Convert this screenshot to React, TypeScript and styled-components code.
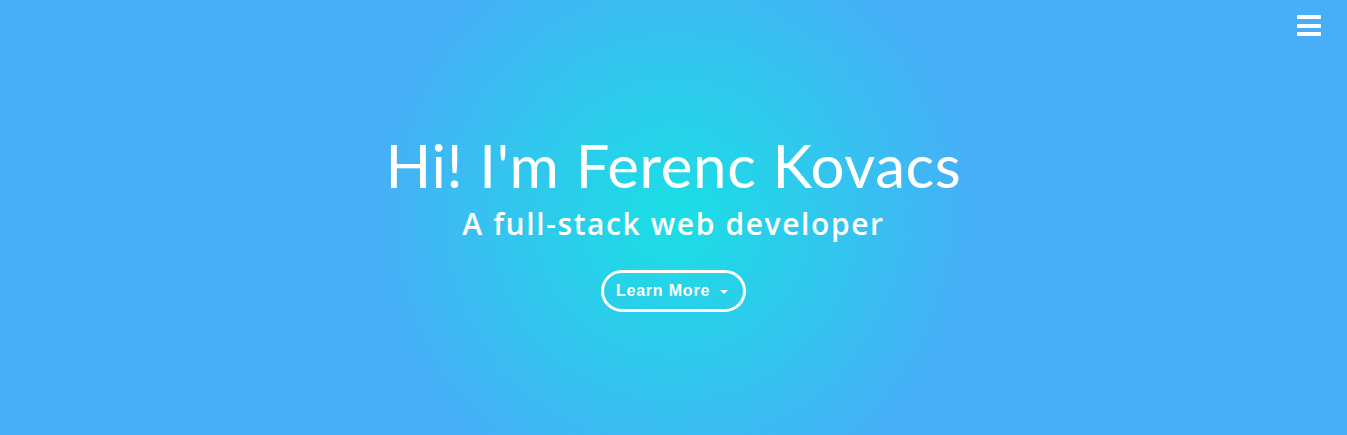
import styled, { createGlobalStyle } from "styled-components";

const GlobalStyle = createGlobalStyle`
  html, body {
    margin: 0;
    padding: 0;
  }
  body {
    font-family: "Lato", "Liberation Sans", sans-serif;
    color: #fff;
  }
`;

const Hero = styled.header`
  position: relative;
  box-sizing: border-box;
  width: 100%;
  height: 435px;
  padding-top: 12px;
  display: flex;
  flex-direction: column;
  align-items: center;
  justify-content: center;
  background: radial-gradient(circle 310px at 50% 50%, #1adfe4 0%, #48aef8 100%);
  overflow: hidden;
`;

const MenuButton = styled.button`
  position: absolute;
  top: 14px;
  right: 26px;
  padding: 0;
  border: none;
  background: none;
  cursor: pointer;
  display: flex;
`;

const Title = styled.h1`
  margin: 0;
  font-family: "Lato", sans-serif;
  font-weight: 400;
  font-size: 60px;
  line-height: 1;
  letter-spacing: 0.6px;
`;

const Subtitle = styled.h2`
  margin: 11px 0 0;
  font-family: "Open Sans", sans-serif;
  font-weight: 600;
  font-size: 30px;
  line-height: 1.2;
  letter-spacing: 1.6px;
`;

const LearnMore = styled.button`
  margin-top: 28px;
  display: flex;
  align-items: center;
  gap: 10px;
  height: 42px;
  padding: 0 15px 0 12px;
  border: 3px solid #fff;
  border-radius: 22px;
  background: transparent;
  color: #fff;
  font-family: "Liberation Sans", Arial, sans-serif;
  font-weight: 700;
  font-size: 16px;
  letter-spacing: 0.8px;
  cursor: pointer;
`;

const Caret = styled.span`
  width: 0;
  height: 0;
  border-left: 4px solid transparent;
  border-right: 4px solid transparent;
  border-top: 4px solid #fff;
  margin-top: 2px;
`;

const BarsIcon = () => (
  <svg width="24" height="22" viewBox="0 0 24 22">
    <rect x="0" y="1" width="24" height="4" rx="1" fill="#fff" />
    <rect x="0" y="10" width="24" height="4" rx="1" fill="#fff" />
    <rect x="0" y="18" width="24" height="4" rx="1" fill="#fff" />
  </svg>
);

export default function App() {
  return (
    <>
      <GlobalStyle />
      <Hero>
        <MenuButton aria-label="menu">
          <BarsIcon />
        </MenuButton>
        <Title>Hi! I'm Ferenc Kovacs</Title>
        <Subtitle>A full-stack web developer</Subtitle>
        <LearnMore>
          Learn More
          <Caret />
        </LearnMore>
      </Hero>
    </>
  );
}
